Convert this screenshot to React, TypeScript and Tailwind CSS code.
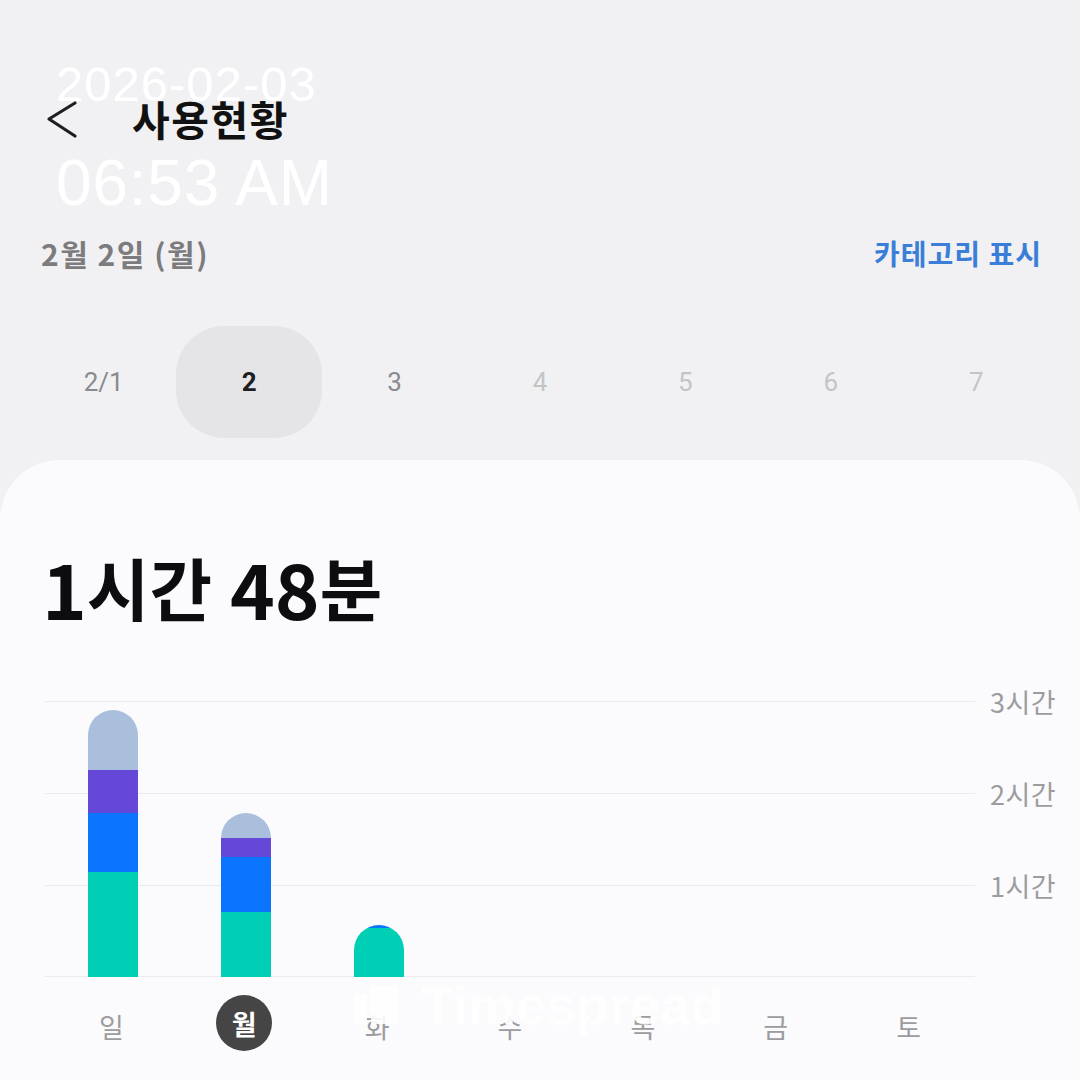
import React from "react";

const KR = { fontFamily: '"Noto Sans CJK KR", "Noto Sans", sans-serif' };

type Seg = { h: number; c: string };
const bars: Seg[][] = [
  [
    { h: 105, c: "#00cfb6" },
    { h: 59, c: "#0b75ff" },
    { h: 43, c: "#6548d8" },
    { h: 60, c: "#aabfdc" },
  ],
  [
    { h: 65, c: "#00cfb6" },
    { h: 55, c: "#0b75ff" },
    { h: 19, c: "#6548d8" },
    { h: 25, c: "#aabfdc" },
  ],
  [
    { h: 49, c: "#00cfb6" },
    { h: 3, c: "#0b75ff" },
  ],
  [],
  [],
  [],
  [],
];

const dates = [
  { t: "2/1", cls: "text-[#8a8a8c]" },
  { t: "2", cls: "text-[#1e1e20] font-bold", sel: true },
  { t: "3", cls: "text-[#8a8a8c]" },
  { t: "4", cls: "text-[#c4c4c7]" },
  { t: "5", cls: "text-[#c4c4c7]" },
  { t: "6", cls: "text-[#c4c4c7]" },
  { t: "7", cls: "text-[#c4c4c7]" },
];

const days = ["일", "월", "화", "수", "목", "금", "토"];

export default function App() {
  return (
    <div
      className="relative w-[1080px] h-[1080px] overflow-hidden bg-[#f1f1f3] flex flex-col"
      style={KR}
    >
      {/* header */}
      <div className="mt-[96px] h-[44px] flex items-center pl-[46px]">
        <svg width="32" height="42" viewBox="0 0 32 42" className="shrink-0">
          <path d="M29 6 L3 22 L29 39" fill="none" stroke="#1f1f21" strokeWidth="3.2" strokeLinecap="round" strokeLinejoin="round" />
        </svg>
        <div className="ml-[54px] text-[41px] font-bold text-[#111] leading-none tracking-[1.5px]">사용현황</div>
      </div>

      {/* date row */}
      <div className="mt-[96px] h-[34px] flex items-center justify-between pl-[41px] pr-[38px]">
        <div className="text-[30px] font-bold text-[#7c7c7e] leading-none tracking-[1.5px]">2월 2일 (월)</div>
        <div className="text-[28px] font-bold text-[#3b7ed8] leading-none tracking-[1px]">카테고리 표시</div>
      </div>

      {/* day selector */}
      <div className="mt-[56px] h-[112px] px-[31px] grid grid-cols-7">
        {dates.map((d) => (
          <div
            key={d.t}
            className={`flex items-center justify-center rounded-[48px] text-[26px] leading-none ${d.cls} ${d.sel ? "bg-[#e5e5e7]" : ""}`}
            style={{ fontFamily: 'Roboto, "Noto Sans CJK KR", sans-serif' }}
          >
            {d.t}
          </div>
        ))}
      </div>

      {/* card */}
      <div className="mt-[22px] flex-1 bg-[#fbfbfd] rounded-t-[60px] pl-[42px] flex flex-col">
        <div className="mt-[90px] h-[74px] flex items-center text-[68px] font-bold text-[#0d0d0f] leading-none">
          <span className="text-[76px]">1</span>
          <span>시간</span>
          <span className="ml-[18px] text-[76px]">48</span>
          <span>분</span>
        </div>

        {/* chart */}
        <div className="mt-[77px] flex pl-[3px]">
          <div className="relative w-[930px] h-[276px]">
            <div className="h-[92px] border-t border-[#ebebef]" />
            <div className="h-[92px] border-t border-[#ebebef]" />
            <div className="h-[92px] border-t border-b border-[#ebebef]" />
            <div className="absolute inset-0 grid grid-cols-7 items-end justify-items-center">
              {bars.map((b, i) => (
                <div key={i} className="w-[50px] flex flex-col-reverse rounded-t-full overflow-hidden translate-x-[2px]">
                  {b.map((s, j) => (
                    <div key={j} style={{ height: s.h, backgroundColor: s.c }} />
                  ))}
                </div>
              ))}
            </div>
          </div>
          <div className="flex flex-col pl-[15px]">
            {["3시간", "2시간", "1시간"].map((l) => (
              <div key={l} className="h-[92px]">
                <div className="-translate-y-1/2 h-[34px] flex items-center text-[27px] text-[#9c9c9e] leading-none tracking-[0.5px]">
                  {l}
                </div>
              </div>
            ))}
          </div>
        </div>

        {/* day labels */}
        <div className="mt-[18px] ml-[3px] w-[930px] h-[56px] grid grid-cols-7">
          {days.map((d, i) => (
            <div key={d} className="flex items-center justify-center">
              {i === 1 ? (
                <div className="w-[56px] h-[56px] rounded-full bg-[#454545] flex items-center justify-center text-[27px] font-bold text-white leading-none">
                  {d}
                </div>
              ) : (
                <div className="text-[27px] text-[#9c9c9e] leading-none pt-[6px]">{d}</div>
              )}
            </div>
          ))}
        </div>
      </div>

      {/* watermark overlay */}
      <div className="absolute left-[355px] top-[978px] flex items-center gap-[24px] opacity-90">
        <svg width="42" height="38" viewBox="0 0 42 38">
          <rect x="0" y="8" width="12" height="30" fill="#ffffff" />
          <rect x="16" y="0" width="26" height="38" fill="#ffffff" />
        </svg>
        <div className="text-[54px] font-bold text-white leading-none" style={{ fontFamily: '"Liberation Sans", Arial, sans-serif' }}>
          Timespread
        </div>
      </div>

      {/* timestamp overlay */}
      <div
        className="absolute left-[56px] top-[60px] text-white leading-none"
        style={{ fontFamily: '"Liberation Sans", Arial, sans-serif' }}
      >
        <div className="text-[49px] tracking-[1px]">2026-02-03</div>
        <div className="mt-[42px] text-[64px] tracking-[0.8px]">06:53 AM</div>
      </div>
    </div>
  );
}
